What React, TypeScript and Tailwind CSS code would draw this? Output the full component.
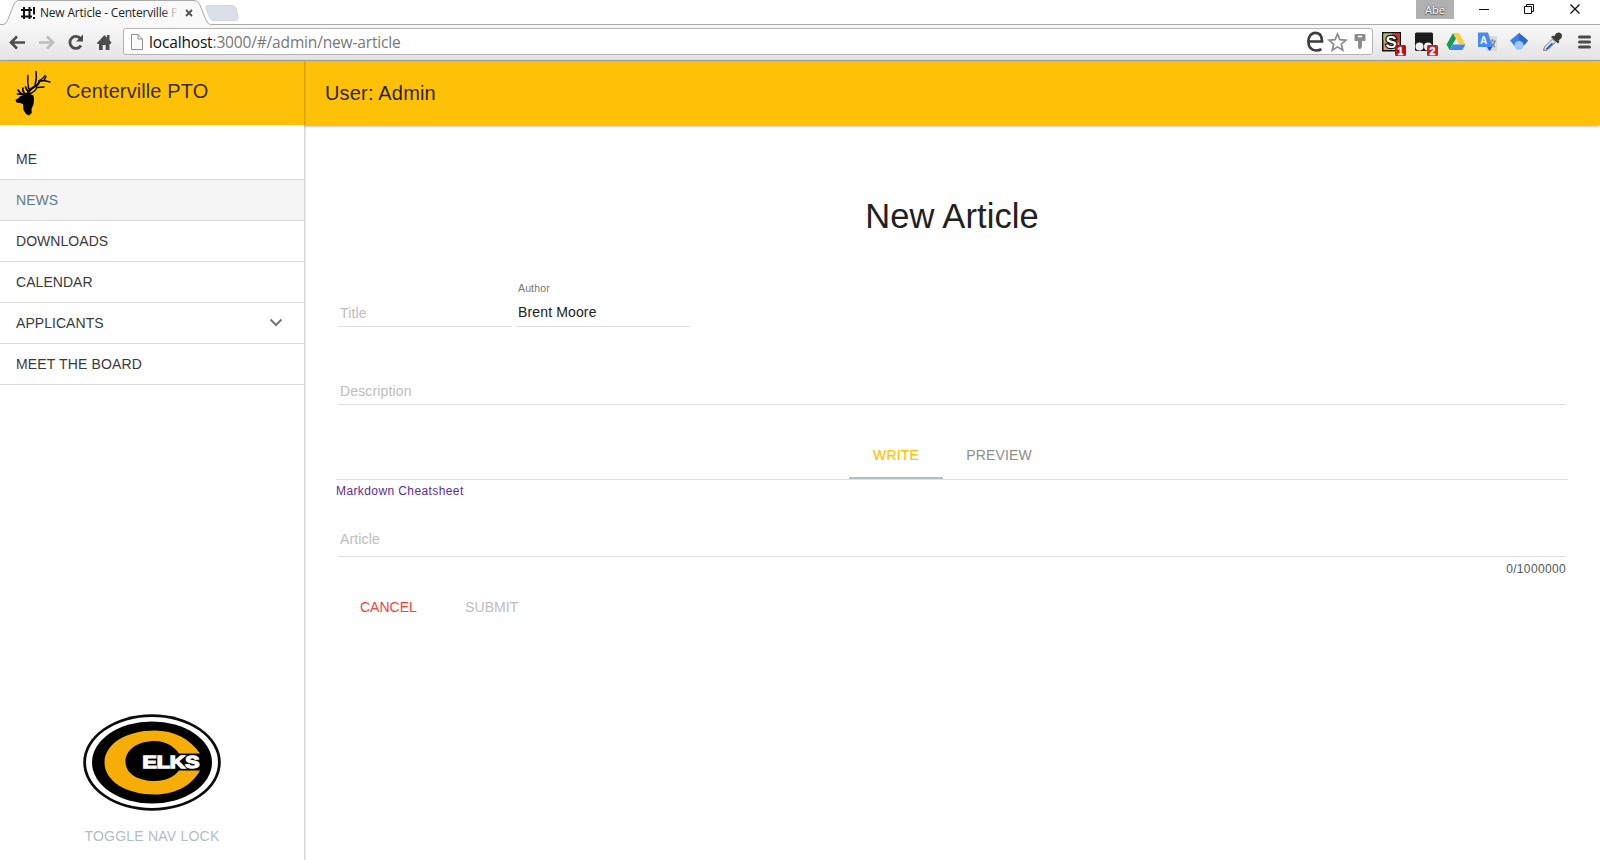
import React from 'react';

const SANS = "font-['Liberation_Sans',Arial,sans-serif]";
const UI = "font-['Open_Sans','Noto_Sans',sans-serif]";

function TabStrip() {
  return (
    <div className="relative flex h-6 w-full items-start bg-white">
      <svg className="absolute left-0 top-0" width="1600" height="25" viewBox="0 0 1600 25">
        <path d="M206.500 5.500H232q3 0 4 2.500l2 9q.7 3.500-2.500 3.500H214q-3.500 0-4.500-3l-3.500-9q-.7-3 .5-3z" fill="#dbe0e8" stroke="#d3d8df" strokeWidth="1" />
        <path d="M0 24.500H3q3 0 4.500-4L14 4Q15.500.5 19 .5H194q4 0 5.500 3.500L206 20q1.700 4.500 5.500 4.500H1600V26H0z" fill="#f9f9f9" />
        <path d="M0 24.500H3q3 0 4.500-4L14 4Q15.500.5 19 .5H194q4 0 5.500 3.500L206 20q1.700 4.500 5.500 4.500H1600" fill="none" stroke="#a9a9a9" />
        <path d="M21 10h11M21 16.500h11M24 7v12M29.500 7v12M34 7v7.500M34 17v2" stroke="#111" strokeWidth="2" fill="none" />
        <path d="M186 10l6 6M192 10l-6 6" stroke="#505050" strokeWidth="1.800" />
      </svg>
      <div className={`relative ml-10 mt-1 w-[138px] overflow-hidden whitespace-nowrap text-[12px] leading-[18px] tracking-[-0.2px] text-[#222] ${UI}`}>
        <span>New Article - Centerville P</span>
        <span className="absolute right-0 top-0 h-full w-4 bg-linear-to-r from-transparent to-[#fafafa]" />
      </div>
      <div className={`relative ml-[1238px] flex h-[19px] w-[38px] items-center justify-center bg-[#b1b1b1] text-[11px] leading-none text-white [text-shadow:0_0_2px_#444,0_1px_1px_#555] ${UI}`}>Abe</div>
      <svg className="relative ml-[25px]" width="104" height="19" viewBox="0 0 104 19" fill="none" stroke="#111">
        <path d="M0 9.500h10" />
        <path d="M45.500 6.500h7v7h-7zM47.500 6.500v-2h7v7h-2" />
        <path d="M91.500 4.500l9 9M100.500 4.500l-9 9" strokeWidth="1.300" />
      </svg>
    </div>
  );
}

function Toolbar() {
  return (
    <div className="flex h-[37px] w-full items-start border-b border-[#a5a5a5] bg-linear-to-b from-[#f9f9f9] to-[#e4e4e4]">
      <svg className="mt-[5px] shrink-0" width="123" height="28" viewBox="0 0 123 28" fill="none">
        <path d="M25 13.500H12M17 7.500l-6 6 6 6" stroke="#4d4d4d" strokeWidth="2.600" />
        <path d="M39 13.500h13M47 7.500l6 6-6 6" stroke="#bdbdbd" strokeWidth="2.600" />
        <path d="M80.500 9.500A6 6 0 1 0 81 16.500" stroke="#4d4d4d" strokeWidth="2.800" />
        <path d="M83 5.500v7h-7z" fill="#4d4d4d" />
        <path d="M97 14l7.500-8 2.500 2.700V6h2.500v5.300l2 2.200-1 1.500h-1v6h-3.800v-5h-3v5H99v-6h-1.500z" fill="#4d4d4d" />
      </svg>
      <div className="mt-[4px] flex h-[27px] w-[1250px] items-center rounded-[3px] border border-[#b3b3b3] bg-white">
        <svg className="ml-[7px] shrink-0" width="12" height="16" viewBox="0 0 12 16" fill="#fafafa" stroke="#8c8c8c">
          <path d="M.5.500H7l4.500 4.500v10.500H.5zM7 .5V5h4.500" />
        </svg>
        <div className={`ml-[6px] flex-1 whitespace-nowrap pt-px text-[15.500px] leading-[22px] tracking-[-0.16px] text-[#777] ${UI}`}>
          <span className="text-[#111]">localhost</span>:3000/#/admin/new-article
        </div>
        <svg className="shrink-0" width="67" height="25" viewBox="0 0 67 25" fill="none">
          <path d="M3.500 12.500h13.500C17 6.500 14.500 3.800 10.700 3.800 6 3.800 3.400 7.500 3.400 12.800c0 5.400 3 8.700 8 8.700 2 0 3.600-.4 5-1.300" stroke="#3d3d3d" strokeWidth="2.700" />
          <path d="M32.500 5l2.400 5.700 6 .5-4.600 4 1.500 6-5.300-3.300-5.300 3.300 1.500-6-4.600-4 6-.5z" stroke="#8a8a8a" strokeWidth="1.700" />
          <path d="M50.500 5h9q1 0 1 1v5q0 1-1 1H57v6l-1.500 2H54l-1-1.500V12h-2.500q-1 0-1-1V6q0-1 1-1z" fill="#8d8d8d" />
          <path d="M53 7.500h4" stroke="#fff" strokeWidth="1.500" />
        </svg>
      </div>
      <svg className="mt-[4px] shrink-0" width="227" height="30" viewBox="0 0 227 30">
        <g>
          <rect x="9.750" y="4.750" width="17.500" height="18" fill="#e1a074" stroke="#111" strokeWidth="1.500" />
          <path d="M10.500 5.500h8.500v7h-8.500z" fill="#a8c059" />
          <path d="M19 5.500h7.500v9H19z" fill="#bf3a28" />
          <path d="M15 17h7v5h-7z" fill="#f1df22" />
          <text x="12.500" y="20" fontFamily="Liberation Sans" fontSize="17" fontWeight="700" fill="#fff" stroke="#111" strokeWidth="2.500" paintOrder="stroke">S</text>
          <rect x="22" y="17" width="11" height="11" rx="1.500" fill="#b90c1c" />
          <text x="27.500" y="26.500" textAnchor="middle" fontFamily="Liberation Sans" fontSize="10.500" fontWeight="700" fill="#fff" stroke="#fff" strokeWidth="0.400">1</text>
        </g>
        <g>
          <rect x="42" y="4.500" width="18" height="18.500" rx="1.500" fill="#1b1b1b" />
          <circle cx="46.500" cy="18.500" r="4" fill="#eee" /><circle cx="55" cy="18.500" r="4" fill="#eee" />
          <rect x="54" y="17" width="11" height="11" rx="1.500" fill="#c5202c" />
          <text x="59.500" y="26.500" textAnchor="middle" fontFamily="Liberation Sans" fontSize="10.500" fontWeight="700" fill="#fff" stroke="#fff" strokeWidth="0.400">2</text>
        </g>
        <g>
          <path d="M80 5l3 5.500-6.500 11.500-3-5.500z" fill="#0f9d58" />
          <path d="M80 5h6l6.500 11.500h-6z" fill="#ffcd40" />
          <path d="M79.800 16.500h12.700l-3.200 5.500H76.500z" fill="#4285f4" />
        </g>
        <g>
          <path d="M110 8h14v15h-11z" fill="#d9d9d9" />
          <path d="M116 13h7M119.500 11v2M122 13q-1 4-5 6M118 14q1 3 4 5" stroke="#6f8a94" strokeWidth="1.200" fill="none" />
          <path d="M105 4.500h10l4.500 14.500H105z" fill="#4a8af4" /><path d="M114 19h5.500l-3 4z" fill="#2a56c6" />
          <text x="107" y="16" fontFamily="Liberation Sans" fontSize="10" fontWeight="700" fill="#fff">A</text>
        </g>
        <g>
          <path d="M146 5l9 7.500-4.500 5.500h-9l-4.500-5.500z" fill="#3f7fe8" />
          <path d="M146 5l9 7.500-3.500 4-5.500-5z" fill="#2f66c9" />
          <circle cx="146" cy="17.500" r="4.500" fill="#a5c6fb" />
        </g>
        <g>
          <path d="M170.500 22.500l1-3.500 8-8 3 3-8 8z" fill="#e8e8f2" stroke="#777" />
          <path d="M172 21.500l6.500-6.500 2 .5-5.500 5.500z" fill="#2e50c8" />
          <path d="M178 9l2-1.500 1 1 2-3q3-2 5 0t0 5l-2.500 2 1 1-1.500 2z" fill="#3a3a3a" />
        </g>
        <path d="M206.500 9h10M206.500 14h10M206.500 19h10" stroke="#4b4b4b" strokeWidth="3" strokeLinecap="round" />
      </svg>
    </div>
  );
}

function ElkHead() {
  return (
    <svg className="ml-[15px] mt-[9px] shrink-0" width="38" height="48" viewBox="0 0 38 48">
      <path d="M9 25l3-2.500 3 1.500 3.500 1.500.5 3-.5 6-2 4.500.2 4-2.700 2.500-3-1.500-2.500-4-.5-6-3-1-3.500-.5-1-2.500 3-2 2-2z" fill="#000" />
      <g fill="none" stroke="#000" strokeLinecap="round">
        <path d="M12 25q1.500-5 7-8 4.500-2 5.500-6" strokeWidth="2.200" />
        <path d="M14 24q6-2 8-6.500 4.500-.500 7-.5M24 11q4-2 6-5.500M24 11q3 0 5-.5l6 1.500M29 10.500l2-4M13.500 18.500q-1.200-6-.5-13M20 15q2-6 1-13.500M15.500 20q-2-.5-2-3" strokeWidth="1.400" />
        <path d="M12 25q-6 0-9-5M9.500 24.500q-4-.5-7-.5M11 24.500q-4-3-3-6.500M14 22q-3-2-3.500-5" strokeWidth="1.700" />
      </g>
    </svg>
  );
}

function ElksLogo() {
  return (
    <svg className="-ml-px" width="138" height="97" viewBox="0 0 138 97">
      <ellipse cx="69" cy="48.500" rx="68.800" ry="48.200" fill="#0b0b0b" />
      <ellipse cx="69" cy="48.500" rx="66" ry="45.500" fill="#fff" />
      <ellipse cx="69" cy="48.500" rx="60" ry="41" fill="#000" />
      <path d="M117 39.500C107 25 91 16.500 72 16.500 43 16.500 21.500 30 21.500 48.500S43 80.500 72 80.500c20 0 37-9 45-24H96C91 63 82 67 72 67 54 67 42.500 59 42.500 47.500S54 27 72 27c10 0 19 5 24 12.500z" fill="#f6ae06" />
      <path d="M96 41h21v14H94z" fill="#000" />
      <text x="59.500" y="54" fontFamily="Liberation Sans" fontSize="16.500" fontWeight="700" fill="#fff" stroke="#fff" strokeWidth="1.300" textLength="57" lengthAdjust="spacingAndGlyphs">ELKS</text>
    </svg>
  );
}

const NAV = ['ME', 'NEWS', 'DOWNLOADS', 'CALENDAR', 'APPLICANTS', 'MEET THE BOARD'];

function Sidebar() {
  return (
    <aside className="relative z-10 flex w-[304px] shrink-0 flex-col bg-white shadow-[1px_0_2px_rgba(0,0,0,0.24)]">
      <div className="flex h-16 shrink-0 bg-[#ffc107]">
        <ElkHead />
        <div className="ml-[13px] mt-[17px] text-[20px] leading-[26px] tracking-[0.1px] text-black/80">Centerville PTO</div>
      </div>
      <nav className="mt-[14px] flex flex-col">
        {NAV.map((item) => (
          <a
            key={item}
            className={`flex h-[41px] items-center justify-between border-b border-[#dcdcdc] pl-4 pr-[21px] text-[14px] ${item === 'MEET THE BOARD' ? 'tracking-[0.14px]' : 'tracking-[0.05px]'} ${item === 'NEWS' ? 'bg-[#f5f5f5] text-[#607d8b]' : 'text-[#3a3a3a]'}`}
          >
            {item}
            {item === 'APPLICANTS' && (
              <svg width="14" height="10" viewBox="0 0 14 10" fill="none">
                <path d="M1.500 1.500l5.500 5.500 5.500-5.500" stroke="#757575" strokeWidth="2" />
              </svg>
            )}
          </a>
        ))}
      </nav>
      <div className="mt-auto flex flex-col items-center pb-[14px]">
        <ElksLogo />
        <div className="mt-[15px] text-[14px] leading-5 tracking-[0.22px] text-[#b0bec5]">TOGGLE NAV LOCK</div>
      </div>
    </aside>
  );
}

function ArticleForm() {
  return (
    <div className="flex flex-col pl-8 pr-8 pt-[71px] text-[14px] leading-5 tracking-[0.14px]">
      <h1 className="text-center text-[34.500px] leading-10 tracking-[0.1px] text-[#212121]">New Article</h1>
      <div className="ml-0.5 mt-[46px] flex items-end gap-1">
        <div className="w-[174px] border-b border-[#e0e0e0] pb-[3px] pl-0.5 text-[#bdbdbd]">Title</div>
        <div className="w-[174px] border-b border-[#e0e0e0] pb-1 pl-0.5">
          <div className="mb-2 text-[10.500px] leading-3 text-[#757575]">Author</div>
          <div className="text-[#212121]">Brent Moore</div>
        </div>
      </div>
      <div className="mx-0.5 mt-[54px] border-b border-[#e0e0e0] pb-[3px] pl-0.5 text-[#bdbdbd]">Description</div>
      <div className="mt-[26px] flex h-[49px] justify-center border-b border-[#e0e0e0]">
        <div className="flex h-12 w-[94px] justify-center border-b-2 border-[#b0bec5] pl-px pt-[14px] text-[#ffc107] [-webkit-text-stroke:0.2px_#ffc107]">WRITE</div>
        <div className="w-[113px] pt-[14px] text-center text-[#8e8e8e]">PREVIEW</div>
      </div>
      <a className="mt-[3px] text-[12px] leading-4 tracking-[0.4px] text-[#5e2c95]">Markdown Cheatsheet</a>
      <div className="mx-0.5 mt-[30px] border-b border-[#e0e0e0] pb-[7px] pl-0.5 text-[#bdbdbd]">Article</div>
      <div className="mr-0.5 mt-1 text-right text-[12px] leading-4 tracking-[0.35px] text-[#555]">0/1000000</div>
      <div className="mt-5 flex pl-6">
        <button className="w-[105px] text-left tracking-normal text-[#f44336]">CANCEL</button>
        <button className="text-left tracking-[0.1px] text-[#bdbdbd]">SUBMIT</button>
      </div>
    </div>
  );
}

export default function App() {
  return (
    <div className={`flex h-[860px] w-[1600px] flex-col overflow-hidden bg-white ${SANS}`}>
      <TabStrip />
      <Toolbar />
      <div className="flex min-h-0 flex-1">
        <Sidebar />
        <main className="flex min-w-0 flex-1 flex-col bg-white">
          <header className="flex h-16 shrink-0 items-center bg-[#ffc107] pb-px pl-[21px] text-[20px] tracking-[0.18px] text-black/85 shadow-[0_1px_3px_rgba(0,0,0,0.4)]">User: Admin</header>
          <ArticleForm />
        </main>
      </div>
    </div>
  );
}
